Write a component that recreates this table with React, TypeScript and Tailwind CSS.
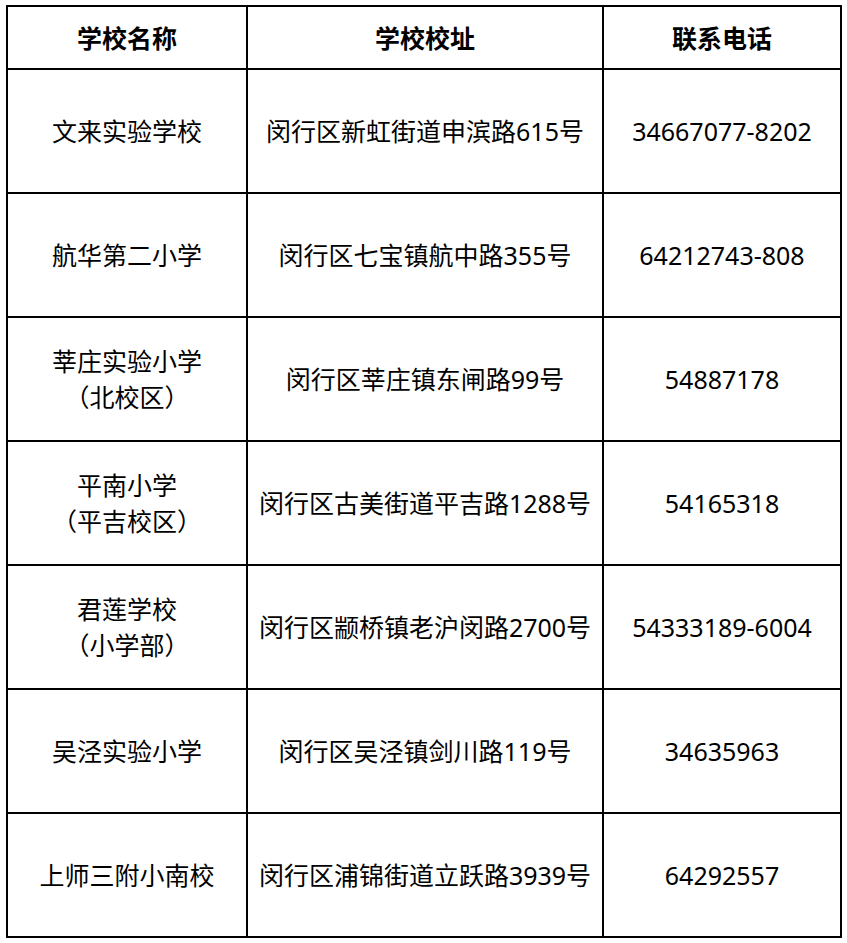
const rows: { name: string[]; addr: string; tel: string }[] = [
  { name: ['文来实验学校'], addr: '闵行区新虹街道申滨路615号', tel: '34667077-8202' },
  { name: ['航华第二小学'], addr: '闵行区七宝镇航中路355号', tel: '64212743-808' },
  { name: ['莘庄实验小学', '（北校区）'], addr: '闵行区莘庄镇东闸路99号', tel: '54887178' },
  { name: ['平南小学', '（平吉校区）'], addr: '闵行区古美街道平吉路1288号', tel: '54165318' },
  { name: ['君莲学校', '（小学部）'], addr: '闵行区颛桥镇老沪闵路2700号', tel: '54333189-6004' },
  { name: ['吴泾实验小学'], addr: '闵行区吴泾镇剑川路119号', tel: '34635963' },
  { name: ['上师三附小南校'], addr: '闵行区浦锦街道立跃路3939号', tel: '64292557' },
];

export default function App() {
  return (
    <div
      className="w-[847px] h-[943px] bg-white pl-[6px] pt-[5px] text-black"
      style={{ fontFamily: '"Noto Sans", "Noto Sans CJK SC", sans-serif' }}
    >
      <table className="border-collapse border-2 border-black w-[834px] table-fixed text-[25px] leading-[36px]">
        <colgroup>
          <col className="w-[240px]" />
          <col className="w-[356px]" />
          <col className="w-[238px]" />
        </colgroup>
        <thead>
          <tr className="h-[63px]">
            <th className="border-2 border-black font-bold text-center">学校名称</th>
            <th className="border-2 border-black font-bold text-center">学校校址</th>
            <th className="border-2 border-black font-bold text-center">联系电话</th>
          </tr>
        </thead>
        <tbody>
          {rows.map((r) => (
            <tr key={r.addr} className="h-[124px]">
              <td className="border-2 border-black text-center">
                {r.name.map((n) => (
                  <div key={n}>{n}</div>
                ))}
              </td>
              <td className="border-2 border-black text-center">{r.addr}</td>
              <td className="border-2 border-black text-center">{r.tel}</td>
            </tr>
          ))}
        </tbody>
      </table>
    </div>
  );
}
